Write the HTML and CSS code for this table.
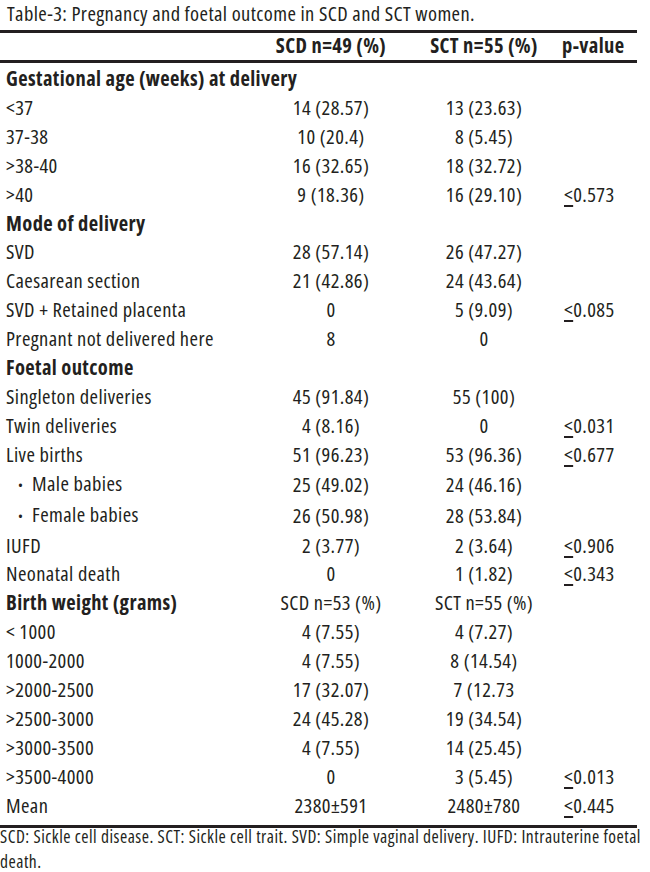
FILE: index.html
```html
<!DOCTYPE html>
<html lang="en">
<head>
<meta charset="utf-8">
<title>Table-3</title>
<link rel="stylesheet" href="styles.css">
</head>
<body>
<div class="page">
  <p class="caption">Table-3: Pregnancy and foetal outcome in SCD and SCT women.</p>
  <table class="data">
    <colgroup>
      <col class="c-label">
      <col class="c-scd">
      <col class="c-sct">
      <col class="c-p">
    </colgroup>
    <thead>
      <tr>
        <th class="label"></th>
        <th class="num">SCD n=49 (%)</th>
        <th class="num">SCT n=55 (%)</th>
        <th class="pv">p-value</th>
      </tr>
    </thead>
    <tbody>
      <tr class="section"><td colspan="4">Gestational age (weeks) at delivery</td></tr>
      <tr><td>&lt;37</td><td class="num">14 (28.57)</td><td class="num">13 (23.63)</td><td class="pv"></td></tr>
      <tr><td>37-38</td><td class="num">10 (20.4)</td><td class="num">8 (5.45)</td><td class="pv"></td></tr>
      <tr><td>&gt;38-40</td><td class="num">16 (32.65)</td><td class="num">18 (32.72)</td><td class="pv"></td></tr>
      <tr><td>&gt;40</td><td class="num">9 (18.36)</td><td class="num">16 (29.10)</td><td class="pv"><span class="le">&lt;</span>0.573</td></tr>
      <tr class="section"><td colspan="4">Mode of delivery</td></tr>
      <tr><td>SVD</td><td class="num">28 (57.14)</td><td class="num">26 (47.27)</td><td class="pv"></td></tr>
      <tr><td>Caesarean section</td><td class="num">21 (42.86)</td><td class="num">24 (43.64)</td><td class="pv"></td></tr>
      <tr><td>SVD + Retained placenta</td><td class="num">0</td><td class="num">5 (9.09)</td><td class="pv"><span class="le">&lt;</span>0.085</td></tr>
      <tr><td>Pregnant not delivered here</td><td class="num">8</td><td class="num">0</td><td class="pv"></td></tr>
      <tr class="section"><td colspan="4">Foetal outcome</td></tr>
      <tr><td>Singleton deliveries</td><td class="num">45 (91.84)</td><td class="num">55 (100)</td><td class="pv"></td></tr>
      <tr><td>Twin deliveries</td><td class="num">4 (8.16)</td><td class="num">0</td><td class="pv"><span class="le">&lt;</span>0.031</td></tr>
      <tr><td>Live births</td><td class="num">51 (96.23)</td><td class="num">53 (96.36)</td><td class="pv"><span class="le">&lt;</span>0.677</td></tr>
      <tr><td class="sub"><span class="dot">•</span>Male babies</td><td class="num">25 (49.02)</td><td class="num">24 (46.16)</td><td class="pv"></td></tr>
      <tr><td class="sub"><span class="dot">•</span>Female babies</td><td class="num">26 (50.98)</td><td class="num">28 (53.84)</td><td class="pv"></td></tr>
      <tr><td>IUFD</td><td class="num">2 (3.77)</td><td class="num">2 (3.64)</td><td class="pv"><span class="le">&lt;</span>0.906</td></tr>
      <tr><td>Neonatal death</td><td class="num">0</td><td class="num">1 (1.82)</td><td class="pv"><span class="le">&lt;</span>0.343</td></tr>
      <tr class="section"><td>Birth weight (grams)</td><td class="num plain">SCD n=53 (%)</td><td class="num plain">SCT n=55 (%)</td><td class="pv"></td></tr>
      <tr><td>&lt; 1000</td><td class="num">4 (7.55)</td><td class="num">4 (7.27)</td><td class="pv"></td></tr>
      <tr><td>1000-2000</td><td class="num">4 (7.55)</td><td class="num">8 (14.54)</td><td class="pv"></td></tr>
      <tr><td>&gt;2000-2500</td><td class="num">17 (32.07)</td><td class="num">7 (12.73</td><td class="pv"></td></tr>
      <tr><td>&gt;2500-3000</td><td class="num">24 (45.28)</td><td class="num">19 (34.54)</td><td class="pv"></td></tr>
      <tr><td>&gt;3000-3500</td><td class="num">4 (7.55)</td><td class="num">14 (25.45)</td><td class="pv"></td></tr>
      <tr><td>&gt;3500-4000</td><td class="num">0</td><td class="num">3 (5.45)</td><td class="pv"><span class="le">&lt;</span>0.013</td></tr>
      <tr class="last"><td>Mean</td><td class="num">2380±591</td><td class="num">2480±780</td><td class="pv"><span class="le">&lt;</span>0.445</td></tr>
    </tbody>
  </table>
  <p class="note">SCD: Sickle cell disease. SCT: Sickle cell trait. SVD: Simple vaginal delivery. IUFD: Intrauterine foetal death.</p>
</div>
</body>
</html>
```
FILE: styles.css
```css
html, body {
  margin: 0;
  padding: 0;
  background: #ffffff;
}

.page {
  width: 650px;
  color: #231f20;
  font-family: "Open Sans", "DejaVu Sans Condensed", sans-serif;
  font-stretch: 75%;
  font-size: 20.5px;
  letter-spacing: 0.4px;
}

.caption {
  margin: 0 0 4px 0;
  padding-left: 7px;
  line-height: 26px;
}

.data {
  width: 637px;
  border-collapse: collapse;
  table-layout: fixed;
  border-top: 3px solid #231f20;
  border-bottom: 3px solid #231f20;
}

.c-label { width: 260px; }
.c-scd { width: 142px; }
.c-sct { width: 164px; }
.c-p { width: 71px; }

.data th {
  font-weight: 700;
  height: 25px;
  line-height: 25px;
  padding: 0 0 2px 0;
  border-bottom: 3px solid #231f20;
  white-space: nowrap;
}

.data td {
  padding: 3px 0 0 0;
  line-height: 25.9px;
  white-space: nowrap;
}

.data td:first-child {
  padding-left: 6px;
}

.data .num {
  text-align: center;
}

.data .pv {
  text-align: left;
  text-indent: -2px;
}

.data th.pv {
  text-indent: -4px;
}

.section td {
  font-weight: 700;
}

.section td.plain {
  font-weight: 400;
}

.data td.sub {
  padding-left: 18px;
}

.dot {
  display: inline-block;
  width: 14px;
  font-size: 13px;
  vertical-align: 1px;
}

.le {
  text-decoration: underline;
  text-decoration-thickness: 2px;
  text-underline-offset: 3px;
}

.last td {
  padding-bottom: 6px;
}

.note {
  margin: -4px 0 0 0;
  padding: 0 6px 0 0;
  font-size: 17.5px;
  letter-spacing: 0.5px;
  line-height: 25px;
}
```
